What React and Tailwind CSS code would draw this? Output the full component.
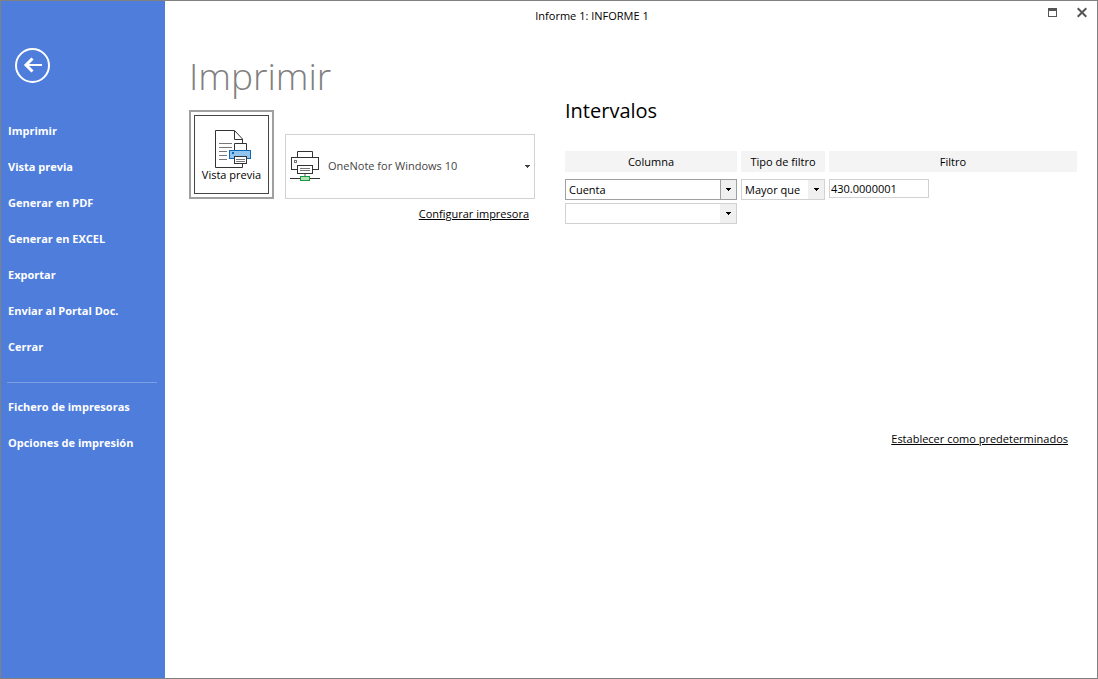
import React, { useState } from "react";

const mainActions = [
  "Imprimir",
  "Vista previa",
  "Generar en PDF",
  "Generar en EXCEL",
  "Exportar",
  "Enviar al Portal Doc.",
  "Cerrar",
];

const settingsActions = ["Fichero de impresoras", "Opciones de impresión"];

const BackIcon = () => (
  <svg width="35" height="35" viewBox="0 0 35 35" fill="none" stroke="#fff">
    <circle cx="17.5" cy="17.5" r="16.5" strokeWidth="2" />
    <path d="M10.5 17H27" strokeWidth="2" />
    <path d="M17.5 10.5L11 17L17.5 23.5" strokeWidth="3" />
  </svg>
);

const PreviewIcon = () => (
  <svg width="41" height="38" viewBox="-4 0 41 38" fill="none">
    <path d="M19 .5H.5V37.5H27.5V9L19.5 .5V9.5H27.5" fill="#fff" stroke="#333" />
    <path
      d="M4 13.5H17M4 17.5H17M4 21.5H12M4 25.5H12M4 29.5H12"
      stroke="#777"
    />
    <path d="M19.5 20.5V13.5H31.5V20.5" fill="#fff" stroke="#333" />
    <rect x="14.5" y="20.5" width="21" height="8" fill="#91c5ee" stroke="#1068b5" />
    <rect x="17" y="22" width="2" height="2" fill="#1068b5" />
    <rect x="19.5" y="26.5" width="12" height="7" fill="#fff" stroke="#333" />
    <path d="M21 29.5H30M21 31.5H30" stroke="#777" />
  </svg>
);

const NetworkPrinterIcon = () => (
  <svg width="30" height="31" viewBox="0 0 30 31" fill="none">
    <path d="M7.5 6.5V.5H22.5V6.5" stroke="#333" />
    <rect x="1.5" y="6.5" width="27" height="12" fill="#fff" stroke="#333" />
    <rect x="4.5" y="9.5" width="2" height="2" stroke="#777" />
    <rect x="7.5" y="14.5" width="15" height="8" fill="#fff" stroke="#333" />
    <path d="M10 17.5H20M10 19.5H20" stroke="#777" />
    <path d="M15 23V25" stroke="#aaa" strokeWidth="2" />
    <path d="M0 27.5H30" stroke="#333" />
    <rect x="10.5" y="25.5" width="9" height="4" fill="#b5dfbb" stroke="#169c3f" />
  </svg>
);

const Arrow = () => (
  <svg width="5" height="3" viewBox="0 0 5 3" fill="currentColor">
    <path d="M0 0H5V1H4V2H3V3H2V2H1V1H0Z" />
  </svg>
);

const NavItem = ({ label }) => (
  <li>
    <button className="block h-9 w-full px-[7px] text-left text-[11px] font-bold text-white">
      {label}
    </button>
  </li>
);

/* Combo box with a grey drop button drawn over the right end of the select */
const Combo = ({ label, value, options, onChange, active }) => (
  <div className="relative">
    <select
      aria-label={label}
      value={value}
      onChange={(e) => onChange(e.target.value)}
      className={`block h-[21px] w-full appearance-none border bg-white pl-[3px] pr-4 text-[11px] leading-4 text-black outline-none ${
        active ? "border-[#a0a0a0]" : "border-[#d2d2d2]"
      }`}
    >
      {options.map((option) => (
        <option key={option} value={option}>
          {option}
        </option>
      ))}
    </select>
    <span
      className={`pointer-events-none absolute inset-y-px right-px flex w-4 items-center justify-center bg-[#f0f0f0] ${
        active ? "border-l border-[#a0a0a0]" : ""
      }`}
    >
      <Arrow />
    </span>
  </div>
);

const Sidebar = () => (
  <nav className="w-[164px] shrink-0 bg-[#4e7ddc] pt-[47px]">
    <button aria-label="Volver" className="ml-3.5 block">
      <BackIcon />
    </button>
    <ul className="mt-[30px]">
      {mainActions.map((label) => (
        <NavItem key={label} label={label} />
      ))}
    </ul>
    <hr className="mt-[17px] mr-2 mb-1.5 ml-1.5 border-[#7c9fe6]" />
    <ul>
      {settingsActions.map((label) => (
        <NavItem key={label} label={label} />
      ))}
    </ul>
  </nav>
);

const TitleBar = () => (
  <header className="flex h-[30px] items-center">
    <p className="flex-1 text-center text-[11px] text-black">
      Informe 1: INFORME 1
    </p>
    <div className="flex h-full w-[78px] items-start justify-end gap-[19px] pt-1.5 pr-2.5">
      <button aria-label="Maximizar" className="block">
        <svg width="11" height="11" viewBox="0 0 11 11" fill="none">
          <rect x="1.5" y="1.5" width="8" height="8" stroke="#555" />
          <path d="M1 2.5H10" stroke="#555" strokeWidth="3" />
        </svg>
      </button>
      <button aria-label="Cerrar ventana" className="block">
        <svg width="10" height="11" viewBox="0 0 10 11" fill="none">
          <path d="M.7 1.2L9.3 9.8M9.3 1.2L.7 9.8" stroke="#555" strokeWidth="2" />
        </svg>
      </button>
    </div>
  </header>
);

const PrinterPanel = () => {
  const [printer, setPrinter] = useState("OneNote for Windows 10");

  return (
    <section className="w-[346px] shrink-0">
      <h1 className="mt-5 text-[37px] leading-[50px] font-light text-[#808080]">
        Imprimir
      </h1>
      <div className="mt-[9px] flex items-end gap-[11px]">
        <button className="h-[89px] w-[85px] shrink-0 border-2 border-[#a0a0a0] p-[3px]">
          <span className="flex h-full flex-col items-center border border-[#444] pt-3.5 text-[11px] leading-[14px] whitespace-nowrap text-black">
            <PreviewIcon />
            Vista previa
          </span>
        </button>
        <div className="relative flex-1">
          <select
            aria-label="Impresora"
            value={printer}
            onChange={(e) => setPrinter(e.target.value)}
            className="block h-[65px] w-full appearance-none border border-[#d2d2d2] bg-white pr-5 pl-[42px] text-[11px] text-[#444] outline-none"
          >
            <option>OneNote for Windows 10</option>
          </select>
          <span className="pointer-events-none absolute inset-y-0 left-[5px] flex items-center">
            <NetworkPrinterIcon />
          </span>
          <span className="pointer-events-none absolute inset-y-0 right-[5px] flex items-center text-[#444]">
            <Arrow />
          </span>
        </div>
      </div>
      <p className="mt-1.5 pr-1.5 text-right text-[11px] leading-[18px]">
        <a href="#configurar" className="text-black underline">
          Configurar impresora
        </a>
      </p>
    </section>
  );
};

const RangesPanel = () => {
  const [column, setColumn] = useState("Cuenta");
  const [filterType, setFilterType] = useState("Mayor que");
  const [filter, setFilter] = useState("430.0000001");
  const [nextColumn, setNextColumn] = useState("");

  return (
    <section className="flex-1 pt-[66px]">
      <h2 className="pl-1 text-[20px] leading-7 text-black">Intervalos</h2>
      <table className="mt-[23px] w-full table-fixed border-separate border-spacing-x-1 border-spacing-y-[3px] text-[11px] leading-4 text-black">
        <colgroup>
          <col className="w-[172px]" />
          <col className="w-[84px]" />
          <col />
        </colgroup>
        <thead>
          <tr className="h-[21px]">
            <th className="bg-[#f4f4f4] p-0 font-normal">Columna</th>
            <th className="bg-[#f4f4f4] p-0 font-normal">Tipo de filtro</th>
            <th className="bg-[#f4f4f4] p-0 font-normal">Filtro</th>
          </tr>
        </thead>
        <tbody>
          <tr>
            <td className="p-0 pt-1 align-top">
              <Combo
                label="Columna"
                value={column}
                options={["Cuenta", ""]}
                onChange={setColumn}
                active
              />
            </td>
            <td className="p-0 pt-1 align-top">
              <Combo
                label="Tipo de filtro"
                value={filterType}
                options={["Mayor que"]}
                onChange={setFilterType}
              />
            </td>
            <td className="p-0 pt-1 align-top">
              <input
                type="text"
                aria-label="Filtro"
                value={filter}
                onChange={(e) => setFilter(e.target.value)}
                className="block h-[19px] w-[100px] border border-[#d2d2d2] bg-white px-px text-[11px] outline-none"
              />
            </td>
          </tr>
          <tr>
            <td className="p-0 align-top">
              <Combo
                label="Columna siguiente"
                value={nextColumn}
                options={["", "Cuenta"]}
                onChange={setNextColumn}
              />
            </td>
          </tr>
        </tbody>
      </table>
      <p className="mt-[203px] pr-[13px] text-right text-[11px] leading-[18px]">
        <a href="#predeterminados" className="text-black underline">
          Establecer como predeterminados
        </a>
      </p>
    </section>
  );
};

const App = () => (
  <div className="flex min-h-screen border border-[#808080] bg-white font-['Open_Sans','Noto_Sans',sans-serif]">
    <Sidebar />
    <div className="flex min-w-0 flex-1 flex-col">
      <TitleBar />
      <main className="flex flex-1 items-start gap-[26px] pr-4 pl-6">
        <PrinterPanel />
        <RangesPanel />
      </main>
    </div>
  </div>
);

export default App;
